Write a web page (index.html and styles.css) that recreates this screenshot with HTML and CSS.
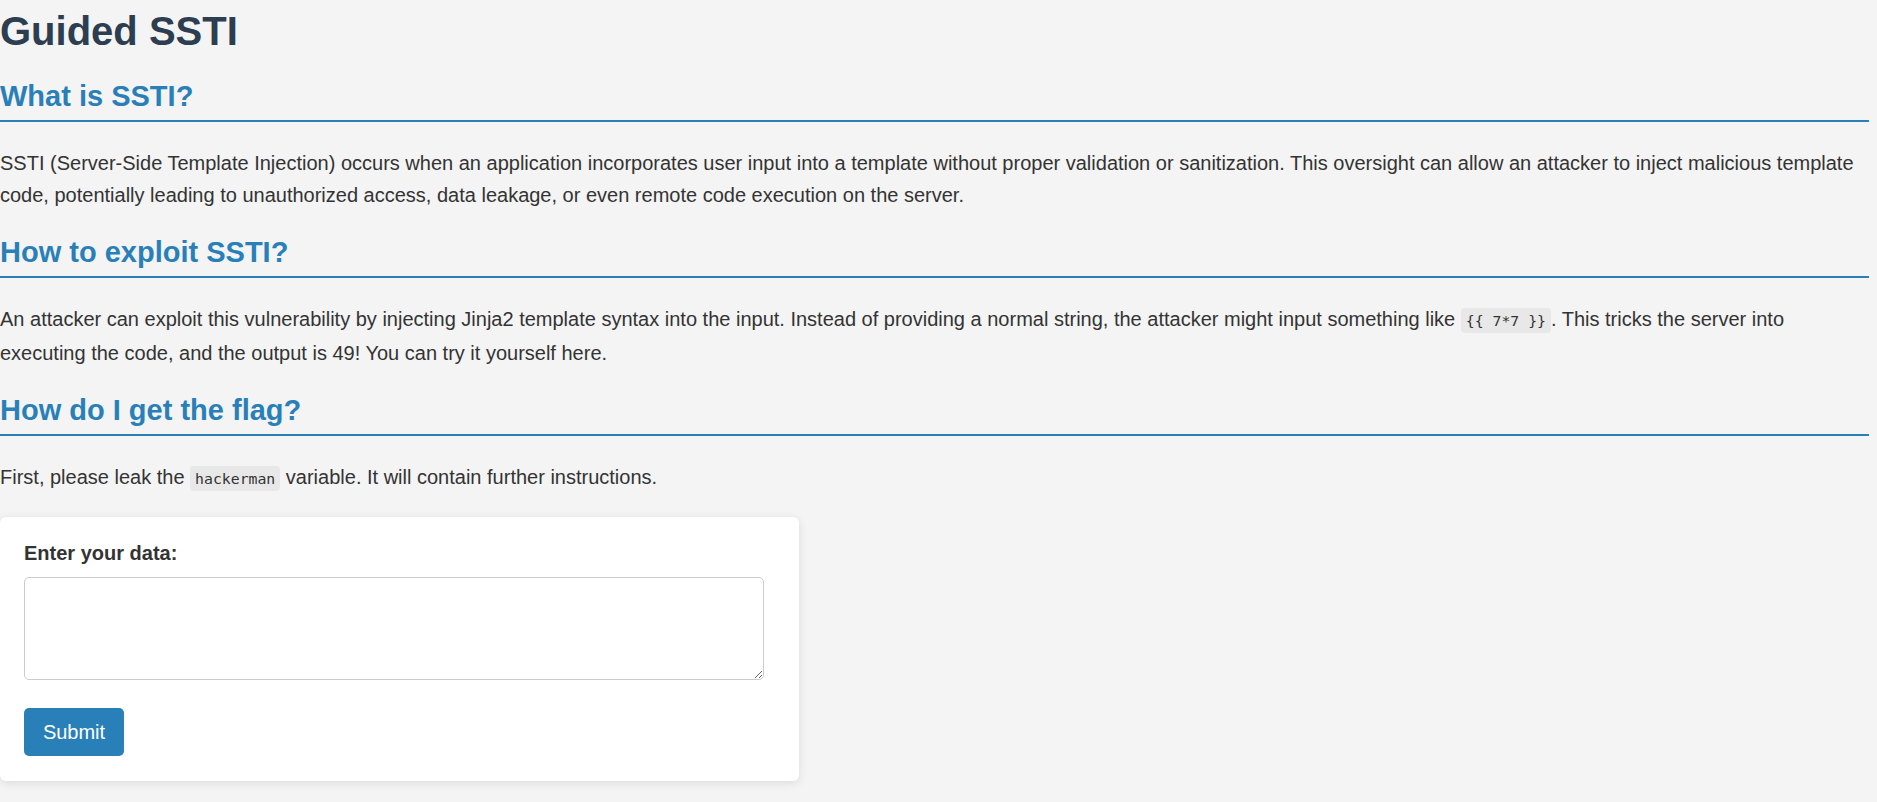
FILE: index.html
```html
<!DOCTYPE html>
<html lang="en">
<head>
<meta charset="utf-8">
<title>Guided SSTI</title>
<link rel="stylesheet" href="styles.css">
</head>
<body>
<main class="page">
  <h1 class="title">Guided SSTI</h1>

  <h2 class="section-title">What is SSTI?</h2>
  <p class="text">SSTI (Server-Side Template Injection) occurs when an application incorporates user input into a template without proper validation or sanitization. This oversight can allow an attacker to inject malicious template code, potentially leading to unauthorized access, data leakage, or even remote code execution on the server.</p>

  <h2 class="section-title">How to exploit SSTI?</h2>
  <p class="text">An attacker can exploit this vulnerability by injecting Jinja2 template syntax into the input. Instead of providing a normal string, the attacker might input something like <code class="code">{{ 7*7 }}</code>. This tricks the server into executing the code, and the output is 49! You can try it yourself here.</p>

  <h2 class="section-title">How do I get the flag?</h2>
  <p class="text">First, please leak the <code class="code">hackerman</code> variable. It will contain further instructions.</p>

  <form class="card" onsubmit="return false;">
    <label class="label" for="data">Enter your data:</label>
    <textarea class="input" id="data" name="data"></textarea>
    <button class="button" type="submit">Submit</button>
  </form>
</main>
</body>
</html>
```
FILE: styles.css
```css
html, body {
  margin: 0;
  padding: 0;
  background: #f4f4f4;
}

body {
  font-family: "Liberation Sans", Arial, sans-serif;
  color: #333333;
}

.page {
  padding: 0 8px 40px 0;
}

.title {
  margin: 7px 0 0;
  font-size: 40px;
  line-height: 48px;
  font-weight: 700;
  color: #2c3e50;
}

.section-title {
  margin: 24px 0 25px;
  padding-bottom: 6px;
  font-size: 29px;
  line-height: 35px;
  font-weight: 700;
  color: #2980b9;
  border-bottom: 2px solid #2980b9;
}

.text {
  margin: 0;
  font-size: 20px;
  line-height: 32px;
}

.code {
  font-family: "DejaVu Sans Mono", "Liberation Mono", monospace;
  font-size: 14.8px;
  background: #e8e8e8;
  border-radius: 4px;
  padding: 4px 5px;
  color: #333333;
}

.card {
  display: flex;
  flex-direction: column;
  align-items: flex-start;
  width: 799px;
  box-sizing: border-box;
  margin-top: 22px;
  padding: 25px 24px 25px;
  background: #ffffff;
  border-radius: 6px;
  box-shadow: 0 2px 10px rgba(0, 0, 0, 0.1);
}

.label {
  font-size: 20px;
  line-height: 22px;
  font-weight: 700;
  color: #333333;
}

.input {
  display: block;
  width: 740px;
  height: 103px;
  box-sizing: border-box;
  margin: 13px 0 28px;
  padding: 8px;
  border: 1px solid #cccccc;
  border-radius: 5px;
  background: #ffffff;
  font-family: "Liberation Sans", Arial, sans-serif;
  font-size: 16px;
}

.button {
  width: 100px;
  height: 48px;
  border: none;
  border-radius: 5px;
  background: #2980b9;
  color: #ffffff;
  font-family: "Liberation Sans", Arial, sans-serif;
  font-size: 20px;
  cursor: pointer;
}
```
